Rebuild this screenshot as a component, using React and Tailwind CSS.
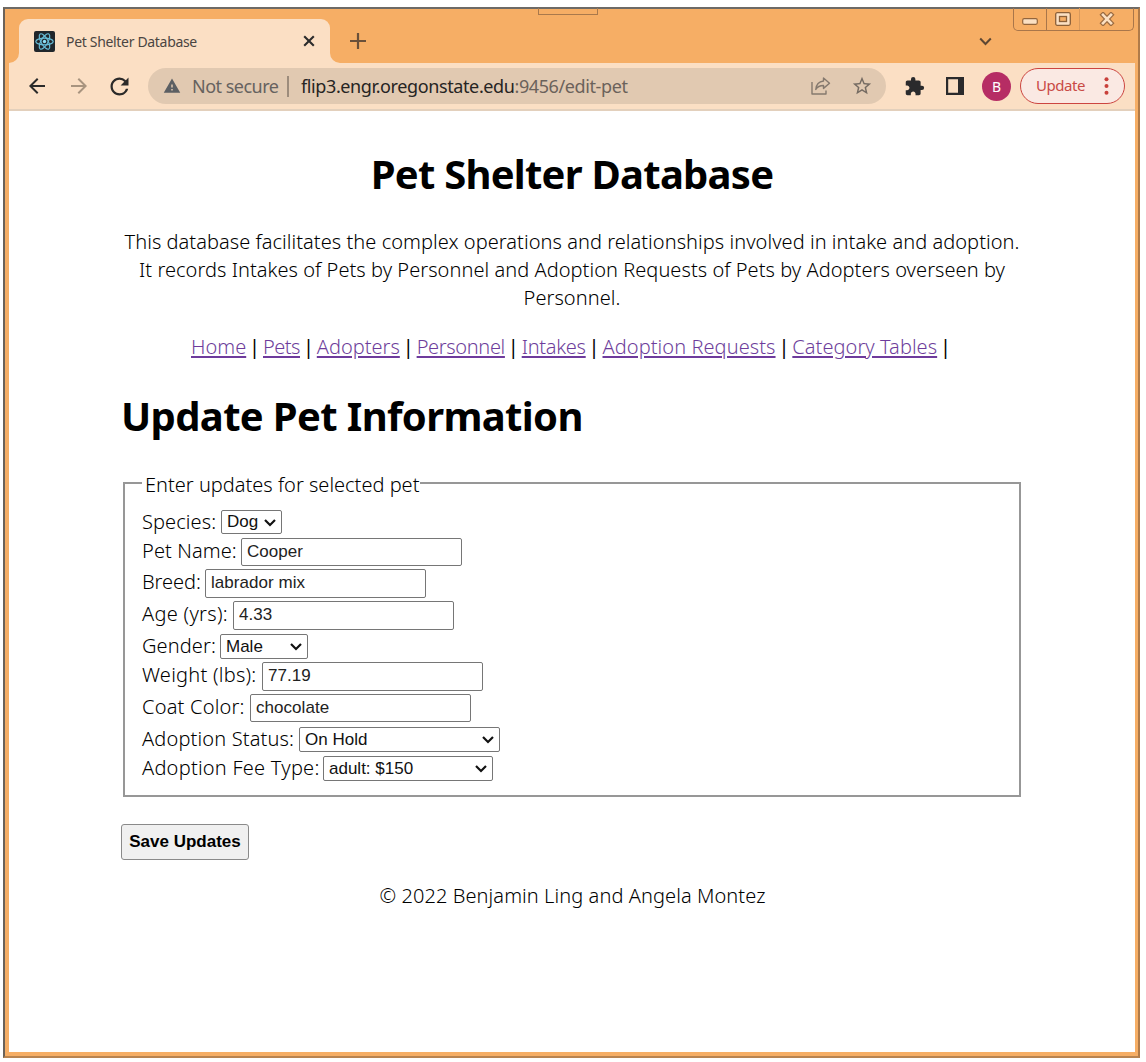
import React from "react";
import { MdArrowBack, MdArrowForward, MdRefresh, MdWarning, MdStarBorder, MdExtension } from "react-icons/md";

const links = [
  ["Home", "tracking-normal"],
  ["Pets", "tracking-[-0.5px]"],
  ["Adopters", "tracking-normal"],
  ["Personnel", "tracking-[-0.35px]"],
  ["Intakes", "tracking-[-0.28px]"],
  ["Adoption Requests", "tracking-[0.07px]"],
  ["Category Tables", "tracking-[0.05px]"],
];

function TitleBar() {
  return (
    <div className="relative flex h-[54px] items-end pl-[10px]">
      <div className="relative flex h-[44px] w-[311px] items-center rounded-t-[9px] bg-[#fbdfc4] pl-[15px] pr-[15px]">
        <svg className="absolute -left-[10px] bottom-0" width="10" height="10"><path d="M10 0v10H0a10 10 0 0 0 10-10z" fill="#fbdfc4" /></svg>
        <svg className="absolute -right-[10px] bottom-0" width="10" height="10"><path d="M0 0v10h10A10 10 0 0 1 0 0z" fill="#fbdfc4" /></svg>
        <svg className="block shrink-0" width="21" height="21" viewBox="0 0 21 21">
          <rect width="21" height="21" rx="2" fill="#20262b" />
          <g fill="none" stroke="#67bdd8" strokeWidth="1.2">
            <ellipse cx="10.5" cy="10.5" rx="8.7" ry="3.4" />
            <ellipse cx="10.5" cy="10.5" rx="8.7" ry="3.4" transform="rotate(60 10.5 10.5)" />
            <ellipse cx="10.5" cy="10.5" rx="8.7" ry="3.4" transform="rotate(120 10.5 10.5)" />
          </g>
          <circle cx="10.5" cy="10.5" r="1.7" fill="#8fe0f5" />
        </svg>
        <span className="ml-[11px] whitespace-nowrap text-[14px] tracking-[-0.32px] text-[#4a4542]">Pet Shelter Database</span>
        <svg className="ml-auto" width="12" height="12" viewBox="0 0 12 12" stroke="#2b2b2b" strokeWidth="2.1"><path d="M1.2 1.2l9.6 9.6M10.8 1.2L1.2 10.8" /></svg>
      </div>
      <svg className="mb-[14px] ml-[20px]" width="16" height="16" viewBox="0 0 16 16" stroke="#6a5039" strokeWidth="2.2"><path d="M8 0v16M0 8h16" /></svg>
      <svg className="mb-[17px] ml-auto mr-[143px]" width="13" height="9" viewBox="0 0 13 9" fill="none" stroke="#5d4733" strokeWidth="2"><path d="M1.2 1.5L6.5 7l5.3-5.5" /></svg>
      <div className="absolute -top-px left-[529px] h-[7px] w-[60px] border border-t-0 border-[#a9794c]" />
      <div className="absolute -top-px right-px flex h-[23px] w-[121px] rounded-b-[5px] border border-t-0 border-[#a9764a]">
        <div className="flex w-[33px] items-center justify-center border-r border-[#a9764a]">
          <svg className="mt-[5px]" width="16" height="7" viewBox="0 0 16 7"><rect x=".7" y=".7" width="14.6" height="5.6" rx="1.5" fill="#fbe0c3" stroke="#93653c" strokeWidth="1.2" /></svg>
        </div>
        <div className="flex w-[33px] items-center justify-center border-r border-[#d99a5c]">
          <svg width="16" height="14" viewBox="0 0 16 14"><rect x=".7" y=".7" width="14.6" height="12.6" rx="1.5" fill="#fbe0c3" stroke="#8b6039" strokeWidth="1.3" /><rect x="4.5" y="4.5" width="7" height="5" fill="#f6ae65" stroke="#8b6039" strokeWidth="1.3" /></svg>
        </div>
        <div className="flex flex-1 items-center justify-center">
          <svg width="16" height="14" viewBox="0 0 16 14" fill="none" strokeLinecap="square"><path d="M4 2.8l8 8.400M12 2.800l-8 8.400" stroke="#9a6b42" strokeWidth="5" /><path d="M4 2.800l8 8.400M12 2.800l-8 8.400" stroke="#fbe0c3" strokeWidth="2.600" /></svg>
        </div>
      </div>
    </div>
  );
}

function Toolbar() {
  return (
    <div className="flex h-[48px] shrink-0 items-start border-b-2 border-[#e3d0bc] bg-[#fbdfc4] pt-[5px]">
      <div className="flex h-[36px] w-[139px] items-center pl-[16px]">
        <MdArrowBack size={24} color="#2b2a29" />
        <MdArrowForward className="ml-[18px]" size={24} color="#a8947f" />
        <MdRefresh className="ml-[15px]" size={27} color="#2b2a29" />
      </div>
      <div className="flex h-[36px] w-[738px] items-center whitespace-nowrap rounded-full bg-[#e1c9b1] pl-[15px] text-[18px] leading-[36px]">
        <MdWarning size={18} color="#5c5f63" />
        <span className="ml-[11px] w-[86px] tracking-[-0.52px] text-[#66625f]">Not secure</span>
        <span className="ml-[9px] h-[21px] w-[2px] bg-[#9d8c7c]" />
        <span className="ml-[12px] tracking-[-0.39px] text-[#262423]">flip3.engr.oregonstate.edu</span>
        <span className="tracking-[-0.4px] text-[#6b625b]">:9456/edit-pet</span>
        <svg className="ml-auto" width="20" height="18" viewBox="0 0 20 18" fill="none" stroke="#85796e" strokeWidth="1.4" strokeLinejoin="round"><path d="M1 5v12h14v-3.500M12.500 1l6 5.200-6 5.200V8.500C9 8.500 6.500 9.500 4.800 12.500 5.200 8 8 4.500 12.500 4z" /></svg>
        <MdStarBorder className="ml-[20px] mr-[13px]" size={22} color="#756b62" />
      </div>
      <div className="flex h-[36px] flex-1 items-center">
        <MdExtension className="ml-[18px] mr-px" size={21} color="#2a2a2c" />
        <svg className="ml-[20px]" width="18" height="18" viewBox="0 0 18 18"><path fill="#2a2a2c" fillRule="evenodd" d="M0 0h18v18H0zM2.200 2.200v13.600H12V2.200z" /></svg>
        <div className="ml-[18px] flex h-[29px] w-[29px] items-center justify-center rounded-full bg-[#b62d64] text-[14px] text-white">B</div>
        <div className="ml-[9px] flex h-[36px] w-[105px] items-center rounded-full border-[1.5px] border-[#cc4540] bg-[#fae9e3] pl-[15px] text-[15px] tracking-[-0.45px] text-[#c94a45]">
          <span className="relative -top-px">Update</span>
          <svg className="ml-auto mr-[15px]" width="5" height="18" viewBox="0 0 5 18" fill="#c8403b"><circle cx="2.500" cy="2.300" r="2" /><circle cx="2.500" cy="9" r="2" /><circle cx="2.500" cy="15.700" r="2" /></svg>
        </div>
      </div>
    </div>
  );
}

function Field({ label, row, labelWidth, box, value, select }) {
  return (
    <div className={"flex items-start " + row}>
      <label className={"shrink-0 whitespace-nowrap leading-[28px] " + labelWidth + (select ? " -mt-[2px]" : " -mt-px")}>{label}</label>
      {select ? (
        <div className={"relative " + box}>
          <select defaultValue={value} className="block h-full w-full appearance-none rounded-[2px] border border-[#767676] bg-white pl-[5px] font-['Liberation_Sans',Arial,sans-serif] text-[17px] font-normal leading-[22px] tracking-normal text-[#111]">
            <option>{value}</option>
          </select>
          <svg className="pointer-events-none absolute right-[5px] top-[8px]" width="14" height="10" viewBox="0 0 14 10" fill="none" stroke="#111" strokeWidth="2.2"><path d="M2 2l5 5 5-5" /></svg>
        </div>
      ) : (
        <input defaultValue={value} className={"block rounded-[2px] border border-[#767676] bg-white px-[5px] pb-px font-['Liberation_Sans',Arial,sans-serif] text-[17px] font-normal tracking-[0.05px] text-[#222] " + box} />
      )}
    </div>
  );
}

export default function App() {
  return (
    <div className="h-[1062px] w-[1146px] overflow-hidden bg-white pl-[3px] pt-[7px] font-['Noto_Sans',sans-serif] text-black">
      <div className="flex h-[1051px] w-[1137px] flex-col border-2 border-b-[#b98450] border-l-[#6b6259] border-r-[#b07b49] border-t-[#6d6a66] bg-[#f6ae65] pb-[4px] pl-[4px] pr-[3px]">
        <TitleBar />
        <Toolbar />
        <main className="flex-1 bg-white pl-[112px] text-[20px] font-light leading-[28px]">
          <div className="w-[902px]">
            <h1 className="pt-[36px] text-center text-[40px] font-bold leading-[54px] tracking-[-0.75px]">Pet Shelter Database</h1>
            <p className="mt-[27px] text-center tracking-[0.05px]">
              This database facilitates the complex operations and relationships involved in intake and adoption.<br />
              It records Intakes of Pets by Personnel and Adoption Requests of Pets by Adopters overseen by<br />
              Personnel.
            </p>
            <nav className="mt-[21px] flex pl-[70px]">
              {links.map(([name, tracking]) => (
                <React.Fragment key={name}>
                  <a href="#" className={"text-[#551a8b] underline decoration-2 underline-offset-2 opacity-85 " + tracking}>{name}</a>
                  <span className="w-[16.8px] text-center font-normal">|</span>
                </React.Fragment>
              ))}
            </nav>
            <h1 className="mt-[28px] text-[40px] font-bold leading-[54px] tracking-[-0.65px]">Update Pet Information</h1>
            <fieldset className="ml-[2px] mt-[28px] h-[326px] w-[898px] border-2 border-[#979797] px-[17px] tracking-[0.1px]">
              <legend className="h-[24px] pl-[3px] pr-px tracking-normal">Enter updates for selected pet</legend>
              <div className="pt-[15px]">
                <Field label="Species:" select row="h-[28px]" labelWidth="w-[79px]" box="h-[24px] w-[61px]" value="Dog" />
                <Field label="Pet Name:" row="h-[31px]" labelWidth="w-[99px]" box="h-[28px] w-[221px]" value="Cooper" />
                <Field label="Breed:" row="h-[32px]" labelWidth="w-[63px] tracking-[-0.05px]" box="h-[29px] w-[221px]" value="labrador mix" />
                <Field label="Age (yrs):" row="h-[33px]" labelWidth="w-[91px] tracking-[0.3px]" box="h-[29px] w-[221px]" value="4.33" />
                <Field label="Gender:" select row="h-[28px]" labelWidth="w-[78px]" box="h-[25px] w-[88px]" value="Male" />
                <Field label="Weight (lbs):" row="h-[32px]" labelWidth="w-[120px] tracking-[0.25px]" box="h-[29px] w-[221px]" value="77.19" />
                <Field label="Coat Color:" row="h-[33px]" labelWidth="w-[108px] tracking-[0.2px]" box="h-[28px] w-[221px]" value="chocolate" />
                <Field label="Adoption Status:" select row="h-[29px]" labelWidth="w-[157px] tracking-[0.15px]" box="h-[25px] w-[201px]" value="On Hold" />
                <Field label="Adoption Fee Type:" select row="h-[25px]" labelWidth="w-[181px] tracking-[0.24px]" box="h-[25px] w-[170px]" value="adult: $150" />
              </div>
            </fieldset>
            <button className="mt-[27px] block h-[36px] w-[128px] whitespace-nowrap rounded-[3px] border border-[#8a8a8a] bg-[#f0f0f0] font-['Liberation_Sans',Arial,sans-serif] text-[17px] font-bold leading-[32px]">Save Updates</button>
            <footer className="mt-[22px] pl-px text-center tracking-[0.08px]">© 2022 Benjamin Ling and Angela Montez</footer>
          </div>
        </main>
      </div>
    </div>
  );
}
